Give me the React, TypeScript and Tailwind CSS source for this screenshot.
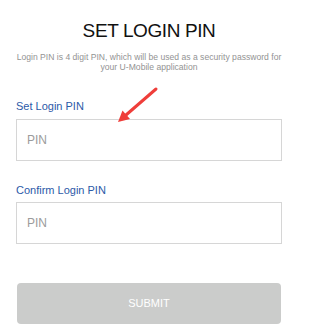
export default function App() {
  return (
    <div className="relative h-[335px] w-[306px] overflow-hidden bg-white font-['Liberation_Sans',Arial,sans-serif]">
      <div className="ml-4 w-[266px] pt-[19px]">
        {/* Header */}
        <h1 className="text-center text-[19px] leading-6 tracking-[-0.4px] text-[#111]">SET LOGIN PIN</h1>
        <p className="mt-[9px] text-center text-[8.6px] leading-[10px] text-[#939393] whitespace-nowrap">
          Login PIN is 4 digit PIN, which will be used as a security password for
          <br />
          your U-Mobile application
        </p>

        {/* Fields */}
        <label className="mt-[27px] block text-[11px] leading-[14px] text-[#2c5aa8]">Set Login PIN</label>
        <div className="mt-[6px] flex h-[42px] items-center border border-[#d6d6d6] px-[10px] text-[12px] text-[#9b9b9b]">
          PIN
        </div>

        <label className="mt-[22px] block text-[11px] leading-[14px] text-[#2c5aa8]">Confirm Login PIN</label>
        <div className="mt-[5px] flex h-[42px] items-center border border-[#d6d6d6] px-[10px] text-[12px] text-[#9b9b9b]">
          PIN
        </div>

        {/* Action */}
        <button className="mx-px mt-[39px] flex h-[41px] w-[264px] items-center justify-center rounded-[4px] bg-[#cbcccb] text-[11px] text-white">
          SUBMIT
        </button>
      </div>

      {/* Annotation arrow */}
      <svg className="absolute left-0 top-0" width="306" height="335" viewBox="0 0 306 335">
        <line x1="156" y1="89" x2="126" y2="115" stroke="#ef3e3a" strokeWidth="3" strokeLinecap="round" />
        <polygon points="118,122 130,119 122.5,110.5" fill="#ef3e3a" />
      </svg>
    </div>
  );
}
